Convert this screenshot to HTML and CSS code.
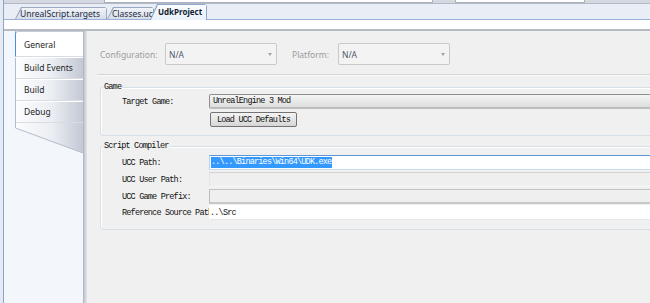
FILE: index.html
```html
<!DOCTYPE html>
<html lang="en">
<head>
    <meta charset="UTF-8">
    <title>UdkProject</title>
    <link rel="stylesheet" href="styles.css">
</head>
<body>
    <div class="window">
        <div class="edge"></div>

        <div class="main">
            <div class="toolbar">
                <span class="tb-box tb-first"></span>
                <span class="tb-box tb-second"></span>
            </div>

            <div class="doctabs">
                <div class="doctab"><span>UnrealScript.targets</span></div>
                <div class="doctab doctab-narrow"><span>Classes.uc</span></div>
                <div class="doctab active"><span>UdkProject</span></div>
            </div>

            <div class="doc-head"></div>

            <div class="doc-body">
                <nav class="side">
                    <ul class="side-tabs">
                        <li class="selected">General</li>
                        <li>Build Events</li>
                        <li>Build</li>
                        <li>Debug</li>
                    </ul>
                    <svg class="side-tail" width="68" height="30" viewBox="0 0 68 30">
                        <defs>
                            <linearGradient id="tailFill" x1="0" y1="0" x2="1" y2="0">
                                <stop offset="0" stop-color="#fcfdfe"/>
                                <stop offset="0.55" stop-color="#eaedf2"/>
                                <stop offset="1" stop-color="#c3c8d5"/>
                            </linearGradient>
                        </defs>
                        <polygon points="0,0 68,0 68,30 0,5" fill="url(#tailFill)"/>
                        <polyline points="0.5,0 0.5,5 68,30" fill="none" stroke="#b3bccc" stroke-width="1"/>
                    </svg>
                </nav>

                <div class="splitter"></div>

                <section class="content">
                    <div class="cfg-row">
                        <span class="cfg-label">Configuration:</span>
                        <span class="cfg-select">N/A <i class="arrow"></i></span>
                        <span class="cfg-label cfg-label-platform">Platform:</span>
                        <span class="cfg-select">N/A <i class="arrow"></i></span>
                    </div>

                    <div class="rule"></div>

                    <div class="group">
                        <span class="group-title">Game</span>
                        <div class="field">
                            <span class="field-label">Target Game:</span>
                            <span class="combo">UnrealEngine 3 Mod</span>
                        </div>
                        <div class="field field-button">
                            <span></span>
                            <button class="btn">Load UCC Defaults</button>
                        </div>
                    </div>

                    <div class="group group-compiler">
                        <span class="group-title">Script Compiler</span>
                        <div class="field">
                            <span class="field-label">UCC Path:</span>
                            <span class="input focused"><span class="selection">..\..\Binaries\Win64\UDK.exe</span></span>
                        </div>
                        <div class="field">
                            <span class="field-label">UCC User Path:</span>
                            <span class="input disabled"></span>
                        </div>
                        <div class="field">
                            <span class="field-label">UCC Game Prefix:</span>
                            <span class="input disabled framed"></span>
                        </div>
                        <div class="field field-last">
                            <span class="field-label">Reference Source Path</span>
                            <span class="input plain">..\Src</span>
                        </div>
                    </div>
                </section>
            </div>
        </div>
    </div>
</body>
</html>
```

FILE: styles.css
```css
* {
    box-sizing: border-box;
}
html, body {
    margin: 0;
    height: 100%;
}
body {
    width: 650px;
    height: 303px;
    overflow: hidden;
    background: #eef2f8;
    font-family: "Noto Sans", sans-serif;
    font-size: 8.5px;
    color: #1b1b1b;
}

.window {
    display: flex;
    height: 100%;
}
.edge {
    width: 4px;
    background: #e6eaf0;
    border-right: 1px solid #87a6cf;
}
.main {
    flex: 1;
    min-width: 0;
    display: flex;
    flex-direction: column;
}

/* strip of the toolbar above */
.toolbar {
    height: 4px;
    display: flex;
    background: #d4d9e1;
    border-bottom: 1px solid #b3bac5;
}
.tb-box {
    height: 3px;
    background: #fff;
    border: 1px solid #a9b1bd;
    border-top: none;
}
.tb-first {
    margin-left: 100px;
    width: 329px;
}
.tb-second {
    margin-left: 22px;
    width: 130px;
}

/* document tabs */
.doctabs {
    height: 16px;
    display: flex;
    align-items: flex-end;
    padding-left: 11px;
    background: #e9eef6;
    border-bottom: 1px solid #98b3d7;
}
.doctab {
    width: 92px;
    height: 12px;
    padding: 1px 1px 0 1px;
    background: #9aa9bf;
    clip-path: polygon(6px 0, calc(100% - 2px) 0, 100% 2px, 100% 100%, 0 100%);
}
.doctab span {
    display: block;
    height: 100%;
    padding-left: 4px;
    overflow: hidden;
    white-space: nowrap;
    line-height: 11px;
    color: #1c2b44;
    background: linear-gradient(#f1f4f8, #d6dde8);
    clip-path: polygon(6px 0, 100% 0, 100% 100%, 0 100%);
}
.doctab-narrow {
    width: 47px;
}
.doctab.active {
    width: 57px;
    height: 16px;
    margin-left: -4px;
    margin-bottom: -1px;
    background: #8ca8cf;
    clip-path: polygon(7px 0, calc(100% - 2px) 0, 100% 2px, 100% 100%, 0 100%);
}
.doctab.active span {
    padding-left: 7px;
    line-height: 13px;
    font-weight: bold;
    font-size: 8px;
    color: #0f1d33;
    background: linear-gradient(#fbfdff, #eaf1fa);
    clip-path: polygon(7px 0, 100% 0, 100% 100%, 0 100%);
}

.doc-head {
    height: 11px;
    background: #fff;
    border-bottom: 2px solid #b5b9c1;
}

.doc-body {
    flex: 1;
    min-height: 0;
    display: flex;
}

/* property page tabs */
.side {
    width: 79px;
    padding-left: 11px;
    background: #f3f6fb;
}
.side-tabs {
    list-style: none;
    margin: 0;
    padding: 0;
    width: 68px;
    border-left: 1px solid #b3bccc;
    background: linear-gradient(to right, #fcfdfe, #eaedf2 55%, #c3c8d5);
}
.side-tabs li {
    height: 22px;
    line-height: 22px;
    padding-left: 8px;
    color: #1e1e1e;
    border-bottom: 1px solid #d9dce3;
    box-shadow: 0 1px 0 #fff;
}
.side-tabs li.selected {
    height: 26px;
    line-height: 26px;
    margin-left: -1px;
    border-left: 1px solid #4a8fdc;
    border-top: 1px solid #c4ccd8;
    border-top-left-radius: 3px;
    background: #fff;
}
.side-tail {
    display: block;
}

.splitter {
    width: 4px;
    background: linear-gradient(to right, #a9aeb9, #c9cdd5 40%, #e2e5ea);
}

/* page content */
.content {
    flex: 1;
    min-width: 0;
    overflow: hidden;
    background: #f0f0f0;
    padding: 12px 0 0 13px;
}

.cfg-row {
    display: flex;
    align-items: center;
    height: 22px;
}
.cfg-label {
    width: 65px;
    color: #9b9b9b;
}
.cfg-label-platform {
    width: 46px;
    margin-left: 15px;
}
.cfg-select {
    width: 112px;
    height: 22px;
    display: flex;
    align-items: center;
    justify-content: space-between;
    padding: 0 4px 0 3px;
    color: #4f5968;
    background: #f3f3f3;
    border: 1px solid #c9c9c9;
    border-radius: 2px;
}
.arrow {
    border-left: 2.5px solid transparent;
    border-right: 2.5px solid transparent;
    border-top: 3px solid #a3a3a3;
}

.rule {
    margin: 9px 0 0 -3px;
    border-top: 1px solid #d4d4d4;
    border-bottom: 1px solid #fbfbfb;
}

.group {
    margin: 11px -20px 0 0;
    padding: 0 0 8px 21px;
    border: 1px solid #d5dfe5;
    border-radius: 3px;
    box-shadow: inset 1px 1px #fff;
    font-family: "Liberation Mono", monospace;
    font-size: 8.5px;
    letter-spacing: -0.8px;
    color: #111;
}
.group-compiler {
    margin-top: 10px;
    padding-bottom: 9px;
}
.group-title {
    display: block;
    width: fit-content;
    margin: -6px 0 0 -19px;
    padding: 0 1px;
    line-height: 11px;
    background: #f0f0f0;
}

.field {
    display: grid;
    grid-template-columns: 87px 1fr;
    align-items: center;
    height: 15px;
    margin-top: 2px;
}
.group .group-title + .field {
    margin-top: 1px;
}
.group-compiler .group-title + .field {
    margin-top: 3px;
}
.field-button {
    margin-top: 3px;
}
.field-last {
    margin-top: 1px;
}
.field-label {
    overflow: hidden;
    white-space: nowrap;
}

.combo {
    height: 15px;
    line-height: 13px;
    padding-left: 3px;
    background: linear-gradient(#f4f4f4, #dedede);
    border: 1px solid #8e8e8e;
    border-bottom: 2px solid #bdbdbd;
    border-radius: 2px 0 0 2px;
}
.btn {
    width: 87px;
    height: 15px;
    margin-left: 1px;
    padding: 0;
    font: inherit;
    letter-spacing: inherit;
    color: #111;
    background: linear-gradient(#f3f3f3, #e6e6e6 50%, #d6d6d6);
    border: 1px solid #737373;
    border-radius: 2px;
}

.input {
    height: 15px;
    display: flex;
    align-items: center;
    padding-left: 1px;
    border: 1px solid transparent;
    white-space: nowrap;
}
.input.focused {
    background: #fff;
    border-color: #5b96d6 #b6d2ef #c8dcf0 #b6d2ef;
}
.selection {
    line-height: 11px;
    padding-right: 1px;
    color: #fff;
    background: #3399ff;
}
.input.disabled {
    background: #efefef;
    border-color: #d3d3d3 #e6e6e6 #f6f6f6 #e6e6e6;
}
.input.framed {
    border-color: #c2c2c2 #e2e2e2 #c8c8c8 #bdbdbd;
    border-bottom-width: 2px;
}
.input.plain {
    padding-left: 0;
    background: #fff;
    border-bottom-color: #e4e8ee;
}
```
